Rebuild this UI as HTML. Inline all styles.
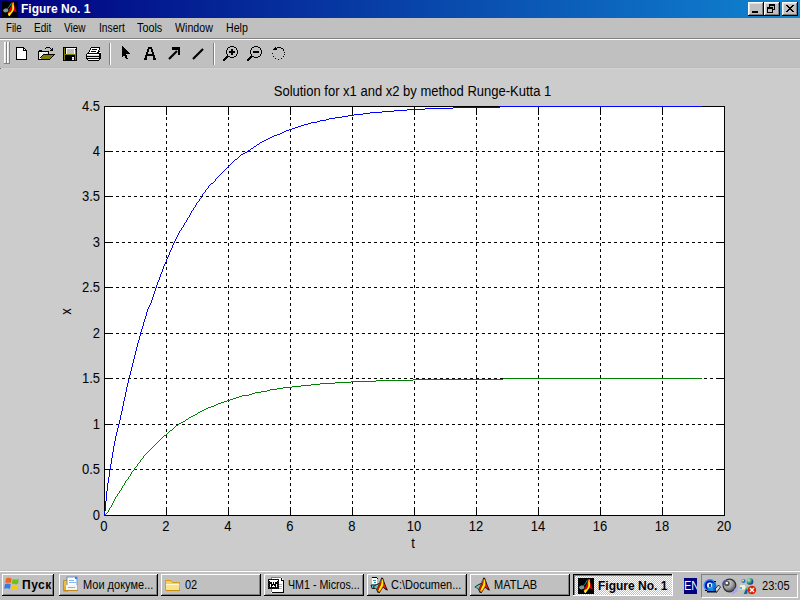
<!DOCTYPE html>
<html><head><meta charset="utf-8">
<style>
*{margin:0;padding:0;box-sizing:border-box}
html,body{width:800px;height:600px;overflow:hidden;background:#cccccc;font-family:"Liberation Sans",sans-serif}
.a{position:absolute}
#title{left:0;top:0;width:800px;height:18px;background:linear-gradient(to right,#000080,#1084d0)}
.tbtn{top:2px;width:16px;height:14px;background:#c0c0c0;box-shadow:inset -1px -1px #000,inset 1px 1px #fff,inset -2px -2px #808080,inset 2px 2px #dfdfdf}
#menu{left:0;top:18px;width:800px;height:22px;background:#c0c0c0;border-bottom:1px solid #fff}
#menu:after{content:"";position:absolute;left:0;top:20px;width:800px;height:1px;background:#808080}
.mi{top:21px;font-size:12px;color:#000;line-height:14px;white-space:nowrap;transform-origin:0 0}
#tool{left:0;top:40px;width:800px;height:28px;background:#c0c0c0}
.sep{top:43px;width:2px;height:22px;border-left:1px solid #808080;border-right:1px solid #fff}
.lbl{font-size:14px;line-height:15px;color:#000;white-space:nowrap;transform:scaleX(0.9286)}
#task{left:0;top:570px;width:800px;height:30px;background:#c0c0c0;border-top:1px solid #c0c0c0}
#task:after{content:"";position:absolute;left:0;top:0;width:800px;height:1px;background:#fff}
.btn{top:574px;height:22px;background:#c0c0c0;box-shadow:inset -1px -1px #000,inset 1px 1px #fff,inset -2px -2px #808080}
.bt{font-size:11px;line-height:12px;color:#000;white-space:nowrap;position:absolute;top:6px}
</style></head><body>
<div id="title" class="a"></div>
<div class="a" style="left:21px;top:2px;font-weight:bold;font-size:12px;line-height:14px;color:#fff;white-space:nowrap">Figure No. 1</div>
<div class="a tbtn" style="left:748px"><div class="a" style="left:4px;top:9px;width:6px;height:2px;background:#000"></div></div>
<div class="a tbtn" style="left:764px"><svg class="a" style="left:0;top:0" width="16" height="14" shape-rendering="crispEdges"><path d="M5 2h6v6h-6z M5 4h6" fill="none"/><rect x="5" y="2" width="6" height="2" fill="#000"/><rect x="10" y="2" width="1" height="6" fill="#000"/><rect x="8" y="7" width="3" height="1" fill="#000"/><rect x="5" y="4" width="1" height="1" fill="#000"/><rect x="3" y="5" width="6" height="2" fill="#000"/><rect x="3" y="5" width="1" height="6" fill="#000"/><rect x="8" y="5" width="1" height="6" fill="#000"/><rect x="3" y="10" width="6" height="1" fill="#000"/></svg></div>
<div class="a tbtn" style="left:782px"><svg class="a" style="left:0;top:0" width="16" height="14" shape-rendering="crispEdges"><rect x="4" y="3" width="2" height="1" fill="#000"/><rect x="10" y="3" width="2" height="1" fill="#000"/><rect x="5" y="4" width="2" height="1" fill="#000"/><rect x="9" y="4" width="2" height="1" fill="#000"/><rect x="6" y="5" width="2" height="1" fill="#000"/><rect x="8" y="5" width="2" height="1" fill="#000"/><rect x="7" y="6" width="2" height="1" fill="#000"/><rect x="6" y="7" width="2" height="1" fill="#000"/><rect x="8" y="7" width="2" height="1" fill="#000"/><rect x="5" y="8" width="2" height="1" fill="#000"/><rect x="9" y="8" width="2" height="1" fill="#000"/><rect x="4" y="9" width="2" height="1" fill="#000"/><rect x="10" y="9" width="2" height="1" fill="#000"/></svg></div>
<div id="menu" class="a"></div>
<div class="a mi" style="left:5.69px;transform:scaleX(0.811)">File</div>
<div class="a mi" style="left:33.66px;transform:scaleX(0.835)">Edit</div>
<div class="a mi" style="left:64.20px;transform:scaleX(0.835)">View</div>
<div class="a mi" style="left:98.64px;transform:scaleX(0.859)">Insert</div>
<div class="a mi" style="left:137.20px;transform:scaleX(0.900)">Tools</div>
<div class="a mi" style="left:175.40px;transform:scaleX(0.888)">Window</div>
<div class="a mi" style="left:225.71px;transform:scaleX(0.887)">Help</div>
<div id="tool" class="a"></div>
<div class="a" style="left:0;top:67px;width:800px;height:1px;background:#bcbcbc"></div><div class="a" style="left:0;top:68px;width:800px;height:1px;background:#d2d2d2"></div><div class="a" style="left:0;top:68px;width:1px;height:1px;background:#707070"></div>
<svg class="a" style="left:0;top:40px" width="300" height="28" shape-rendering="crispEdges"><rect x="4" y="2" width="3" height="22" fill="#808080"/><rect x="4" y="2" width="2" height="21" fill="#fff"/><rect x="5" y="3" width="1" height="20" fill="#e8e8e8"/><rect x="7" y="2" width="3" height="22" fill="#808080"/><rect x="7" y="2" width="2" height="21" fill="#fff"/><rect x="8" y="3" width="1" height="20" fill="#e8e8e8"/><rect x="109" y="3" width="1" height="22" fill="#808080"/><rect x="110" y="3" width="1" height="22" fill="#fff"/><rect x="213" y="3" width="1" height="22" fill="#808080"/><rect x="214" y="3" width="1" height="22" fill="#fff"/></svg>
<svg class="a" style="left:0;top:0" width="300" height="70" shape-rendering="crispEdges"><path d="M16 47h8v1h-8z M16 47h1v13h-1z M16 59h11v1h-11z M26 50h1v10h-1z M23 47h1v4h-1z M23 50h4v1h-4z M24 48h1v1h-1z M25 49h1v1h-1z" fill="#000"/><path d="M17 48h6v3h-6z M17 51h9v8h-9z M24 49h1v1h-1z" fill="#fff"/><path d="M38 51h11v1h-11z M38 51h1v9h-1z M39 50h3v1h-3z M38 59h12v1h-12z M48 51h1v3h-1z" fill="#000"/><path d="M39 52h9v2h-9z M39 54h4v5h-4z" fill="#ffff00"/><path d="M40 52h1v1h-1z M42 52h1v1h-1z M44 52h1v1h-1z M46 52h1v1h-1z M41 53h1v1h-1z M43 53h1v1h-1z M45 53h1v1h-1z M40 54h1v1h-1z M42 54h1v1h-1z M41 55h1v1h-1z M40 56h1v1h-1z M40 58h1v1h-1z" fill="#fff"/><path d="M43 54h12v1h-12z M42 55h1v1h-1z M41 56h1v1h-1z M40 57h1v1h-1z M54 55h-1v1h1z M52 56h1v1h-1z M51 57h1v1h-1z M50 58h1v1h-1z" fill="#000"/><path d="M43 55h10v1h-10z M42 56h10v1h-10z M41 57h10v1h-10z M41 58h9v1h-9z" fill="#808000"/><path d="M45 48h1v1h-1z M46 47h4v1h-4z M50 48h1v1h-1z M51 49h1v1h-1z M50 50h3v1h-3z M52 48h1v2h-1z" fill="#000"/><path d="M63 47h14v14h-14z" fill="#000"/><path d="M64 48h1v12h-1z M75 50h1v10h-1z M64 54h12v1h-12z" fill="#808000"/><path d="M66 48h9v6h-9z" fill="#fff"/><path d="M67 49h7v5h-7z" fill="#c0c0c0"/><path d="M66 54h9v1h-9z" fill="#808000"/><path d="M72 57h2v3h-2z M75 48h1v1h-1z" fill="#fff"/><path d="M72 58h2v1h-2z" fill="#c0c0c0"/><path d="M91 47h9v1h-9z M90 48h1v2h-1z M99 48h1v2h-1z M89 50h1v2h-1z M98 50h1v2h-1z M88 52h1v1h-1z M97 52h1v1h-1z M87 53h13v1h-13z M86 54h1v5h-1z M99 54h1v5h-1z M86 56h14v1h-14z M86 58h15v1h-15z M87 59h1v1h-1z M100 54h1v5h-1z M88 60h11v1h-11z M99 59h1v1h-1z" fill="#000"/><path d="M91 48h8v2h-8z M90 50h8v2h-8z M89 52h8v1h-8z M87 54h12v2h-12z M88 59h11v1h-11z" fill="#fff"/><path d="M92 49h5v1h-5z M91 51h5v1h-5z" fill="#000"/><path d="M87 57h12v1h-12z" fill="#e0e0e0"/><path d="M93 57h4v1h-4z" fill="#ffff00"/><path d="M87 55h12v1h-12z" fill="#d8d8d8"/><path d="M100 53h1v1h-1z M98 52h1v1h-1z M99 51h1v1h-1z" fill="#000"/><path d="M100 52h1v1h-1z M99 52h1v1h-1z" fill="#fff"/><path d="M122 46 L122 57 L124 55 L126 59 L128 59 L126 54 L130 54 Z" fill="#000"/><path d="M148 47h4v2h-4z M147 49h2v3h-2z M151 49h2v3h-2z M146 52h2v3h-2z M152 52h2v3h-2z M147 54h6v2h-6z M145 55h2v3h-2z M153 55h2v3h-2z M144 58h3v2h-3z M153 58h3v2h-3z" fill="#000"/><path d="M169 59 L177 51" stroke="#000" stroke-width="2.2" fill="none" shape-rendering="auto"/><path d="M172 47h8v8h-2v-5h-6z" fill="#000"/><path d="M193 59 L203 49" stroke="#000" stroke-width="2.2" fill="none" shape-rendering="auto"/><path d="M230 46h4v1h-4zM228 47h2v1h-2zM234 47h2v1h-2zM227 48h1v2h-1zM236 48h1v2h-1zM226 50h1v4h-1zM237 50h1v4h-1zM227 54h1v2h-1zM236 54h1v2h-1zM228 56h2v1h-2zM234 56h2v1h-2zM230 57h4v1h-4zM226 56h2v1h-2zM225 57h3v1h-3zM224 58h3v1h-3zM223 59h3v1h-3zM223 60h2v1h-2zM227 55h1v1h-1zM231 49h2v6h-2z M229 51h6v2h-6zM254 46h4v1h-4zM252 47h2v1h-2zM258 47h2v1h-2zM251 48h1v2h-1zM260 48h1v2h-1zM250 50h1v4h-1zM261 50h1v4h-1zM251 54h1v2h-1zM260 54h1v2h-1zM252 56h2v1h-2zM258 56h2v1h-2zM254 57h4v1h-4zM250 56h2v1h-2zM249 57h3v1h-3zM248 58h3v1h-3zM247 59h3v1h-3zM247 60h2v1h-2zM251 55h1v1h-1zM253 51h6v2h-6zM275 47h1v1h-1zM274 48h3v1h-3zM273 49h4v1h-4zM277 47h4v1h-4zM281 48h2v1h-2zM283 49h1v2h-1zM284 52h1v1h-1zM284 54h1v1h-1zM283 56h1v1h-1zM281 58h1v1h-1zM278 59h1v1h-1zM275 58h1v1h-1zM273 56h1v1h-1zM272 53h1v1h-1z" fill="#000"/></svg>
<svg class="a" style="left:0;top:0" width="800" height="570" shape-rendering="crispEdges"><rect x="104" y="106" width="621" height="410" fill="#fff"/><path d="M166.5 515.5V106 M228.5 515.5V106 M290.5 515.5V106 M352.5 515.5V106 M414.5 515.5V106 M476.5 515.5V106 M538.5 515.5V106 M600.5 515.5V106 M662.5 515.5V106" stroke="#000" stroke-width="1" stroke-dasharray="3 3" fill="none"/><path d="M104 469.5H724 M104 424.5H724 M104 378.5H724 M104 333.5H724 M104 287.5H724 M104 242.5H724 M104 196.5H724 M104 151.5H724" stroke="#000" stroke-width="1" stroke-dasharray="3 3" fill="none"/><path d="M166.5 507V515 M166.5 107V115 M228.5 507V515 M228.5 107V115 M290.5 507V515 M290.5 107V115 M352.5 507V515 M352.5 107V115 M414.5 507V515 M414.5 107V115 M476.5 507V515 M476.5 107V115 M538.5 507V515 M538.5 107V115 M600.5 507V515 M600.5 107V115 M662.5 507V515 M662.5 107V115 M105 469.5H113 M716 469.5H724 M105 424.5H113 M716 424.5H724 M105 378.5H113 M716 378.5H724 M105 333.5H113 M716 333.5H724 M105 287.5H113 M716 287.5H724 M105 242.5H113 M716 242.5H724 M105 196.5H113 M716 196.5H724 M105 151.5H113 M716 151.5H724" stroke="#000" stroke-width="1" fill="none"/><path d="M503 378h199v1h-199zM413 379h90v1h-90zM376 380h37v1h-37zM351 381h25v1h-25zM335 382h16v1h-16zM320 383h15v1h-15zM311 384h9v1h-9zM301 385h10v1h-10zM292 386h9v1h-9zM283 387h9v1h-9zM277 388h6v1h-6zM270 389h7v1h-7zM267 390h3v1h-3zM261 391h6v1h-6zM255 392h6v1h-6zM252 393h3v1h-3zM249 394h3v1h-3zM242 395h7v1h-7zM239 396h3v1h-3zM236 397h3v1h-3zM233 398h3v1h-3zM230 399h3v1h-3zM227 400h3v1h-3zM224 401h3v1h-3zM221 402h3v1h-3zM218 403h3v1h-3zM216 404h2v1h-2zM214 405h2v1h-2zM211 406h3v1h-3zM208 407h3v1h-3zM206 408h2v1h-2zM204 409h2v1h-2zM202 410h2v1h-2zM200 411h2v1h-2zM198 412h2v1h-2zM197 413h1v1h-1zM195 414h2v1h-2zM193 415h2v1h-2zM191 416h2v1h-2zM189 417h2v1h-2zM188 418h1v1h-1zM186 419h2v1h-2zM185 420h1v1h-1zM183 421h2v1h-2zM181 422h2v1h-2zM179 423h2v1h-2zM178 424h1v1h-1zM176 425h2v1h-2zM175 426h1v1h-1zM174 427h1v1h-1zM173 428h1v1h-1zM172 429h1v1h-1zM170 430h2v1h-2zM169 431h1v1h-1zM168 432h1v1h-1zM167 433h1v1h-1zM166 434h1v1h-1zM164 435h2v1h-2zM163 436h1v1h-1zM162 437h1v1h-1zM161 438h1v1h-1zM160 439h1v1h-1zM159 440h1v1h-1zM158 441h1v1h-1zM157 442h1v1h-1zM156 443h1v1h-1zM155 444h1v1h-1zM154 445h1v1h-1zM153 446h1v1h-1zM152 447h1v1h-1zM151 448h1v1h-1zM150 449h1v1h-1zM149 450h1v1h-1zM148 451h1v1h-1zM147 452h1v1h-1zM146 453h1v1h-1zM145 454h1v1h-1zM144 455h1v1h-1zM143 456h1v1h-1zM143 457h1v1h-1zM142 458h1v1h-1zM141 459h1v1h-1zM140 460h1v1h-1zM140 461h1v1h-1zM139 462h1v1h-1zM138 463h1v1h-1zM137 464h1v1h-1zM137 465h1v1h-1zM136 466h1v1h-1zM135 467h1v1h-1zM134 468h1v1h-1zM134 469h1v1h-1zM133 470h1v1h-1zM132 471h1v1h-1zM131 472h1v1h-1zM131 473h1v1h-1zM130 474h1v1h-1zM130 475h1v1h-1zM129 476h1v1h-1zM128 477h1v1h-1zM128 478h1v1h-1zM127 479h1v1h-1zM126 480h1v1h-1zM125 481h1v1h-1zM125 482h1v1h-1zM124 483h1v1h-1zM124 484h1v1h-1zM123 485h1v1h-1zM122 486h1v1h-1zM122 487h1v1h-1zM121 488h1v1h-1zM121 489h1v1h-1zM120 490h1v1h-1zM119 491h1v1h-1zM119 492h1v1h-1zM118 493h1v1h-1zM117 494h1v1h-1zM117 495h1v1h-1zM116 496h1v1h-1zM115 497h1v1h-1zM115 498h1v1h-1zM114 499h1v1h-1zM114 500h1v1h-1zM113 501h1v1h-1zM113 502h1v1h-1zM112 503h1v1h-1zM112 504h1v1h-1zM111 505h1v1h-1zM111 506h1v1h-1zM110 507h1v1h-1zM109 508h1v1h-1zM109 509h1v1h-1zM108 510h1v1h-1zM108 511h1v1h-1zM107 512h1v1h-1zM106 513h1v1h-1zM105 514h1v1h-1zM104 515h1v1h-1z" fill="#008000"/><rect x="104.5" y="106.5" width="620" height="409" fill="none" stroke="#000" stroke-width="1"/><path d="M500 106h202v1h-202zM453 107h47v1h-47zM425 108h28v1h-28zM407 109h18v1h-18zM394 110h13v1h-13zM382 111h12v1h-12zM370 112h12v1h-12zM363 113h7v1h-7zM354 114h9v1h-9zM348 115h6v1h-6zM342 116h6v1h-6zM335 117h7v1h-7zM329 118h6v1h-6zM326 119h3v1h-3zM320 120h6v1h-6zM317 121h3v1h-3zM311 122h6v1h-6zM308 123h3v1h-3zM304 124h4v1h-4zM301 125h3v1h-3zM298 126h3v1h-3zM295 127h3v1h-3zM292 128h3v1h-3zM289 129h3v1h-3zM286 130h3v1h-3zM284 131h2v1h-2zM282 132h2v1h-2zM280 133h2v1h-2zM277 134h3v1h-3zM274 135h3v1h-3zM272 136h2v1h-2zM270 137h2v1h-2zM268 138h2v1h-2zM266 139h2v1h-2zM264 140h2v1h-2zM262 141h2v1h-2zM260 142h2v1h-2zM259 143h1v1h-1zM257 144h2v1h-2zM256 145h1v1h-1zM254 146h2v1h-2zM253 147h1v1h-1zM251 148h2v1h-2zM250 149h1v1h-1zM248 150h2v1h-2zM247 151h1v1h-1zM245 152h2v1h-2zM243 153h2v1h-2zM241 154h2v1h-2zM240 155h1v1h-1zM239 156h1v1h-1zM238 157h1v1h-1zM237 158h1v1h-1zM235 159h2v1h-2zM234 160h1v1h-1zM233 161h1v1h-1zM232 162h1v1h-1zM231 163h1v1h-1zM230 164h1v1h-1zM229 165h1v1h-1zM228 166h1v1h-1zM227 167h1v1h-1zM226 168h1v1h-1zM225 169h1v1h-1zM224 170h1v1h-1zM223 171h1v1h-1zM222 172h1v1h-1zM221 173h1v1h-1zM220 174h1v1h-1zM219 175h1v1h-1zM218 176h1v1h-1zM217 177h1v1h-1zM216 178h1v1h-1zM215 179h1v1h-1zM215 180h1v1h-1zM214 181h1v1h-1zM213 182h1v1h-1zM211 183h2v1h-2zM210 184h1v1h-1zM209 185h1v1h-1zM208 186h1v1h-1zM208 187h1v1h-1zM207 188h1v1h-1zM206 189h1v1h-1zM205 190h1v1h-1zM205 191h1v1h-1zM204 192h1v1h-1zM203 193h1v1h-1zM202 194h1v1h-1zM202 195h1v1h-1zM201 196h1v1h-1zM201 197h1v1h-1zM200 198h1v1h-1zM199 199h1v1h-1zM199 200h1v1h-1zM198 201h1v1h-1zM197 202h1v1h-1zM196 203h1v1h-1zM196 204h1v1h-1zM195 205h1v1h-1zM195 206h1v1h-1zM194 207h1v1h-1zM193 208h1v1h-1zM193 209h1v1h-1zM192 210h1v1h-1zM191 211h1v1h-1zM191 212h1v1h-1zM190 213h1v1h-1zM190 214h1v1h-1zM189 215h1v1h-1zM189 216h1v1h-1zM188 217h1v1h-1zM187 218h1v1h-1zM187 219h1v1h-1zM186 220h1v1h-1zM186 221h1v1h-1zM185 222h1v1h-1zM184 223h1v1h-1zM184 224h1v1h-1zM183 225h1v1h-1zM183 226h1v1h-1zM182 227h1v1h-1zM181 228h1v1h-1zM181 229h1v1h-1zM180 230h1v1h-1zM179 231h1v1h-1zM179 232h1v1h-1zM178 233h1v1h-1zM178 234h1v1h-1zM177 235h1v1h-1zM177 236h1v1h-1zM176 237h1v1h-1zM176 238h1v1h-1zM175 239h1v1h-1zM175 240h1v1h-1zM174 241h1v1h-1zM174 242h1v1h-1zM173 243h1v1h-1zM173 244h1v1h-1zM172 245h1v1h-1zM172 246h1v1h-1zM172 247h1v1h-1zM171 248h1v1h-1zM171 249h1v1h-1zM170 250h1v1h-1zM170 251h1v1h-1zM169 252h1v1h-1zM169 253h1v1h-1zM169 254h1v1h-1zM168 255h1v1h-1zM168 256h1v1h-1zM167 257h1v1h-1zM167 258h1v1h-1zM166 259h1v1h-1zM166 260h1v1h-1zM166 261h1v1h-1zM165 262h1v1h-1zM165 263h1v1h-1zM164 264h1v1h-1zM164 265h1v1h-1zM163 266h1v1h-1zM163 267h1v1h-1zM163 268h1v1h-1zM162 269h1v1h-1zM162 270h1v1h-1zM162 271h1v1h-1zM161 272h1v1h-1zM161 273h1v1h-1zM160 274h1v1h-1zM160 275h1v1h-1zM160 276h1v1h-1zM159 277h1v1h-1zM159 278h1v1h-1zM159 279h1v1h-1zM158 280h1v1h-1zM158 281h1v1h-1zM157 282h1v1h-1zM157 283h1v1h-1zM157 284h1v1h-1zM156 285h1v1h-1zM156 286h1v1h-1zM156 287h1v1h-1zM155 288h1v1h-1zM155 289h1v1h-1zM155 290h1v1h-1zM154 291h1v1h-1zM154 292h1v1h-1zM154 293h1v1h-1zM153 294h1v1h-1zM153 295h1v1h-1zM153 296h1v1h-1zM152 297h1v1h-1zM152 298h1v1h-1zM152 299h1v1h-1zM151 300h1v1h-1zM151 301h1v1h-1zM151 302h1v1h-1zM150 303h1v1h-1zM150 304h1v1h-1zM149 305h1v1h-1zM149 306h1v1h-1zM148 307h1v1h-1zM148 308h1v1h-1zM147 309h1v1h-1zM147 310h1v1h-1zM147 311h1v1h-1zM146 312h1v1h-1zM146 313h1v1h-1zM146 314h1v1h-1zM146 315h1v1h-1zM145 316h1v1h-1zM145 317h1v1h-1zM145 318h1v1h-1zM144 319h1v1h-1zM144 320h1v1h-1zM144 321h1v1h-1zM143 322h1v1h-1zM143 323h1v1h-1zM143 324h1v1h-1zM143 325h1v1h-1zM142 326h1v1h-1zM142 327h1v1h-1zM142 328h1v1h-1zM141 329h1v1h-1zM141 330h1v1h-1zM141 331h1v1h-1zM140 332h1v1h-1zM140 333h1v1h-1zM140 334h1v1h-1zM140 335h1v1h-1zM139 336h1v1h-1zM139 337h1v1h-1zM139 338h1v1h-1zM139 339h1v1h-1zM138 340h1v1h-1zM138 341h1v1h-1zM138 342h1v1h-1zM137 343h1v1h-1zM137 344h1v1h-1zM137 345h1v1h-1zM137 346h1v1h-1zM136 347h1v1h-1zM136 348h1v1h-1zM136 349h1v1h-1zM136 350h1v1h-1zM135 351h1v1h-1zM135 352h1v1h-1zM135 353h1v1h-1zM135 354h1v1h-1zM134 355h1v1h-1zM134 356h1v1h-1zM134 357h1v1h-1zM134 358h1v1h-1zM133 359h1v1h-1zM133 360h1v1h-1zM133 361h1v1h-1zM133 362h1v1h-1zM132 363h1v1h-1zM132 364h1v1h-1zM132 365h1v1h-1zM132 366h1v1h-1zM131 367h1v1h-1zM131 368h1v1h-1zM131 369h1v1h-1zM131 370h1v1h-1zM130 371h1v1h-1zM130 372h1v1h-1zM130 373h1v1h-1zM130 374h1v1h-1zM129 375h1v1h-1zM129 376h1v1h-1zM129 377h1v1h-1zM129 378h1v1h-1zM128 379h1v1h-1zM128 380h1v1h-1zM128 381h1v1h-1zM128 382h1v1h-1zM127 383h1v1h-1zM127 384h1v1h-1zM127 385h1v1h-1zM127 386h1v1h-1zM126 387h1v1h-1zM126 388h1v1h-1zM126 389h1v1h-1zM126 390h1v1h-1zM126 391h1v1h-1zM125 392h1v1h-1zM125 393h1v1h-1zM125 394h1v1h-1zM125 395h1v1h-1zM125 396h1v1h-1zM124 397h1v1h-1zM124 398h1v1h-1zM124 399h1v1h-1zM124 400h1v1h-1zM123 401h1v1h-1zM123 402h1v1h-1zM123 403h1v1h-1zM123 404h1v1h-1zM123 405h1v1h-1zM122 406h1v1h-1zM122 407h1v1h-1zM122 408h1v1h-1zM122 409h1v1h-1zM122 410h1v1h-1zM121 411h1v1h-1zM121 412h1v1h-1zM121 413h1v1h-1zM121 414h1v1h-1zM120 415h1v1h-1zM120 416h1v1h-1zM120 417h1v1h-1zM120 418h1v1h-1zM120 419h1v1h-1zM119 420h1v1h-1zM119 421h1v1h-1zM119 422h1v1h-1zM119 423h1v1h-1zM118 424h1v1h-1zM118 425h1v1h-1zM118 426h1v1h-1zM118 427h1v1h-1zM117 428h1v1h-1zM117 429h1v1h-1zM117 430h1v1h-1zM117 431h1v1h-1zM116 432h1v1h-1zM116 433h1v1h-1zM116 434h1v1h-1zM116 435h1v1h-1zM115 436h1v1h-1zM115 437h1v1h-1zM115 438h1v1h-1zM115 439h1v1h-1zM115 440h1v1h-1zM114 441h1v1h-1zM114 442h1v1h-1zM114 443h1v1h-1zM114 444h1v1h-1zM114 445h1v1h-1zM113 446h1v1h-1zM113 447h1v1h-1zM113 448h1v1h-1zM113 449h1v1h-1zM113 450h1v1h-1zM113 451h1v1h-1zM112 452h1v1h-1zM112 453h1v1h-1zM112 454h1v1h-1zM112 455h1v1h-1zM112 456h1v1h-1zM112 457h1v1h-1zM111 458h1v1h-1zM111 459h1v1h-1zM111 460h1v1h-1zM111 461h1v1h-1zM111 462h1v1h-1zM111 463h1v1h-1zM110 464h1v1h-1zM110 465h1v1h-1zM110 466h1v1h-1zM110 467h1v1h-1zM110 468h1v1h-1zM110 469h1v1h-1zM109 470h1v1h-1zM109 471h1v1h-1zM109 472h1v1h-1zM109 473h1v1h-1zM109 474h1v1h-1zM109 475h1v1h-1zM109 476h1v1h-1zM108 477h1v1h-1zM108 478h1v1h-1zM108 479h1v1h-1zM108 480h1v1h-1zM108 481h1v1h-1zM108 482h1v1h-1zM107 483h1v1h-1zM107 484h1v1h-1zM107 485h1v1h-1zM107 486h1v1h-1zM107 487h1v1h-1zM107 488h1v1h-1zM107 489h1v1h-1zM107 490h1v1h-1zM106 491h1v1h-1zM106 492h1v1h-1zM106 493h1v1h-1zM106 494h1v1h-1zM106 495h1v1h-1zM106 496h1v1h-1zM106 497h1v1h-1zM106 498h1v1h-1zM106 499h1v1h-1zM106 500h1v1h-1zM105 501h1v1h-1zM105 502h1v1h-1zM105 503h1v1h-1zM105 504h1v1h-1zM105 505h1v1h-1zM105 506h1v1h-1zM105 507h1v1h-1zM105 508h1v1h-1zM105 509h1v1h-1zM105 510h1v1h-1zM104 511h1v1h-1zM104 512h1v1h-1zM104 513h1v1h-1zM104 514h1v1h-1zM104 515h1v1h-1z" fill="#0000ff"/></svg>
<div class="a lbl" style="left:0;width:825px;top:84px;text-align:center">Solution for x1 and x2 by method Runge-Kutta 1</div>
<div class="a lbl" style="left:0;width:100px;top:508px;text-align:right;transform-origin:100% 0">0</div>
<div class="a lbl" style="left:0;width:100px;top:462px;text-align:right;transform-origin:100% 0">0.5</div>
<div class="a lbl" style="left:0;width:100px;top:417px;text-align:right;transform-origin:100% 0">1</div>
<div class="a lbl" style="left:0;width:100px;top:371px;text-align:right;transform-origin:100% 0">1.5</div>
<div class="a lbl" style="left:0;width:100px;top:326px;text-align:right;transform-origin:100% 0">2</div>
<div class="a lbl" style="left:0;width:100px;top:280px;text-align:right;transform-origin:100% 0">2.5</div>
<div class="a lbl" style="left:0;width:100px;top:235px;text-align:right;transform-origin:100% 0">3</div>
<div class="a lbl" style="left:0;width:100px;top:189px;text-align:right;transform-origin:100% 0">3.5</div>
<div class="a lbl" style="left:0;width:100px;top:144px;text-align:right;transform-origin:100% 0">4</div>
<div class="a lbl" style="left:0;width:100px;top:99px;text-align:right;transform-origin:100% 0">4.5</div>
<div class="a lbl" style="left:84px;width:40px;top:519px;text-align:center">0</div>
<div class="a lbl" style="left:146px;width:40px;top:519px;text-align:center">2</div>
<div class="a lbl" style="left:208px;width:40px;top:519px;text-align:center">4</div>
<div class="a lbl" style="left:270px;width:40px;top:519px;text-align:center">6</div>
<div class="a lbl" style="left:332px;width:40px;top:519px;text-align:center">8</div>
<div class="a lbl" style="left:394px;width:40px;top:519px;text-align:center">10</div>
<div class="a lbl" style="left:456px;width:40px;top:519px;text-align:center">12</div>
<div class="a lbl" style="left:518px;width:40px;top:519px;text-align:center">14</div>
<div class="a lbl" style="left:580px;width:40px;top:519px;text-align:center">16</div>
<div class="a lbl" style="left:642px;width:40px;top:519px;text-align:center">18</div>
<div class="a lbl" style="left:704px;width:40px;top:519px;text-align:center">20</div>
<div class="a lbl" style="left:393px;width:40px;top:536px;text-align:center">t</div>
<div class="a lbl" style="left:46px;top:304px;width:40px;text-align:center;transform:rotate(-90deg) scaleX(0.9286)">x</div>
<div id="task" class="a"></div>
<div class="a btn" style="left:2px;width:52px"></div>
<svg class="a" style="left:4px;top:577px" width="16" height="14" viewBox="0 0 16 14"><path d="M2 1.5 Q4.5 0 7.5 1.5 L6.8 6 Q4 4.8 1.2 6 Z" fill="#f0641e"/><path d="M8.5 2 Q11.5 3.2 14.8 2 L14 6.8 Q11 8 7.8 6.6 Z" fill="#6cc21c"/><path d="M1 7 Q4 5.8 6.7 7.2 L6 11.8 Q3.2 10.6 0.2 11.8 Z" fill="#3a78e8"/><path d="M7.6 7.6 Q10.8 9 13.8 7.8 L13 12.6 Q10 13.8 6.9 12.2 Z" fill="#f8c818"/></svg>
<div class="a" style="left:22px;top:579px;font-weight:bold;font-size:12px;line-height:12px;white-space:nowrap;letter-spacing:0.5px">Пуск</div>
<div class="a btn" style="left:59px;width:99px"></div>
<div class="a" style="left:83px;top:578px;font-size:12px;line-height:14px;white-space:nowrap;transform:scaleX(0.917);transform-origin:0 0">Мои докуме...</div>
<div class="a btn" style="left:161px;width:100px"></div>
<div class="a" style="left:185px;top:578px;font-size:12px;line-height:14px;white-space:nowrap;transform:scaleX(0.917);transform-origin:0 0">02</div>
<div class="a btn" style="left:264px;width:100px"></div>
<div class="a" style="left:288px;top:578px;font-size:12px;line-height:14px;white-space:nowrap;transform:scaleX(0.889);transform-origin:0 0">ЧМ1 - Micros...</div>
<div class="a btn" style="left:367px;width:100px"></div>
<div class="a" style="left:391px;top:578px;font-size:12px;line-height:14px;white-space:nowrap;transform:scaleX(0.917);transform-origin:0 0">C:\Documen...</div>
<div class="a btn" style="left:470px;width:100px"></div>
<div class="a" style="left:494px;top:578px;font-size:12px;line-height:14px;white-space:nowrap;transform:scaleX(0.917);transform-origin:0 0">MATLAB</div>
<svg class="a" style="left:573px;top:574px" width="100" height="22" shape-rendering="crispEdges"><defs><pattern id="dith" width="2" height="2" patternUnits="userSpaceOnUse"><rect width="2" height="2" fill="#fff"/><rect width="1" height="1" fill="#c0c0c0"/><rect x="1" y="1" width="1" height="1" fill="#c0c0c0"/></pattern></defs><rect width="100" height="22" fill="url(#dith)"/><rect width="100" height="1" fill="#000"/><rect width="1" height="22" fill="#000"/><rect x="1" y="1" width="98" height="1" fill="#808080"/><rect x="1" y="1" width="1" height="20" fill="#808080"/><rect x="99" y="0" width="1" height="22" fill="#fff"/><rect x="0" y="21" width="100" height="1" fill="#fff"/></svg>
<div class="a" style="left:598px;top:580px;font-weight:bold;font-size:12px;line-height:12px;white-space:nowrap">Figure No. 1</div>
<div class="a" style="left:684px;top:578px;width:13px;height:16px;background:#000080;overflow:hidden"><div class="a" style="left:0.3px;top:1px;font-size:12px;line-height:14px;color:#fff;white-space:nowrap;transform:scaleX(0.92);transform-origin:0 0">EN</div></div>
<div class="a" style="left:701px;top:574px;width:97px;height:24px;border-top:1px solid #808080;border-left:1px solid #808080;border-right:1px solid #fff;border-bottom:1px solid #fff"></div>
<div class="a" style="left:762.1px;top:579px;font-size:12px;line-height:14px;white-space:nowrap;transform:scaleX(0.92);transform-origin:0 0">23:05</div>
<svg class="a" style="left:0;top:0" width="800" height="600"><rect x="2" y="1" width="16" height="16" fill="#000"/><g transform="translate(2 1)"><path d="M1 9 L3 7.5 L5.5 7.5 L6.5 9 L5.5 11 L3 11.5 L1.5 10.5 Z" fill="#7898a0"/><path d="M5 7.5 L7 5.5 L9 2 L10 1.5 L9.5 3 L7.5 6 L6 7.5 Z" fill="#20a0a0"/><path d="M5.5 12.5 L7 9.5 L9 5 L10 1.5 L11.5 1.5 L12.5 5 L13.5 8.5 L15 11.5 L12.5 10.5 L11 10 L9 12.5 L7.5 15 Z" fill="#e00000"/><path d="M10.3 2.5 L12 3 L12 8 L11 10.5 L9 13 L7.5 15.3 L6 14 L6.5 12 L9 11 L10.3 8 Z" fill="#ffff00"/><path d="M10.7 1.3 L12 1.5 L12 4.7 L10.7 4 Z" fill="#ff9000"/></g><rect x="578" y="578" width="16" height="16" fill="#000"/><g transform="translate(578 578)"><path d="M1 9 L3 7.5 L5.5 7.5 L6.5 9 L5.5 11 L3 11.5 L1.5 10.5 Z" fill="#7898a0"/><path d="M5 7.5 L7 5.5 L9 2 L10 1.5 L9.5 3 L7.5 6 L6 7.5 Z" fill="#20a0a0"/><path d="M5.5 12.5 L7 9.5 L9 5 L10 1.5 L11.5 1.5 L12.5 5 L13.5 8.5 L15 11.5 L12.5 10.5 L11 10 L9 12.5 L7.5 15 Z" fill="#e00000"/><path d="M10.3 2.5 L12 3 L12 8 L11 10.5 L9 13 L7.5 15.3 L6 14 L6.5 12 L9 11 L10.3 8 Z" fill="#ffff00"/><path d="M10.7 1.3 L12 1.5 L12 4.7 L10.7 4 Z" fill="#ff9000"/></g><path d="M63.5 580.5 h3 v-1 h2 v11.5 h-5 z" fill="#f0c040" stroke="#c89010"/><rect x="67" y="577" width="10" height="11" fill="#fff" stroke="#7090c8" stroke-width="1"/><path d="M69 580h5v1h-5z M69 582h7v1h-7z" fill="#80b8f0"/><path d="M75 577h2v2h-2z" fill="#3080f0"/><path d="M64 586 h14 v5 h-14z" fill="#e8b020"/><path d="M66 585h11v5h-11z" fill="#f0f4f8"/><path d="M68 587h7v1h-7z" fill="#80b8f0"/><path d="M64 590h14v1h-14z" fill="#c08818"/><path d="M165.5 580.5 v9.5 h14 v-7.5 h-7 l-1.5 -2 h-5.5 z" fill="#f8d060" stroke="#d0a018" stroke-width="1"/><path d="M166 584 h13.5 l-0.5 6 h-13z" fill="#f8e490"/><path d="M166 584h13v1h-13z" fill="#fff8d0"/><path d="M166 590h14v1h-14z" fill="#c89010"/><defs><pattern id="wd" width="2" height="2" patternUnits="userSpaceOnUse"><rect width="2" height="2" fill="#0000ff"/><rect width="1" height="1" fill="#000"/><rect x="1" y="1" width="1" height="1" fill="#000"/></pattern></defs><path d="M271 577h10l3 3v13h-13z" fill="#fff"/><path d="M271 577h10v1h-10z M271 577h1v15h-1z" fill="#808080"/><path d="M283 580h1v13h-12v-1h11z M281 578h1v2h2v1h-3z" fill="#000" shape-rendering="crispEdges"/><path d="M279 584h3v1h-3z M279 586h3v1h-3z M279 588h3v1h-3z" fill="#b0b0b0"/><rect x="268" y="579" width="11" height="10" fill="url(#wd)" shape-rendering="crispEdges"/><rect x="270" y="581" width="7" height="6" fill="#fff" shape-rendering="crispEdges"/><rect x="269" y="580" width="9" height="1" fill="#fff" shape-rendering="crispEdges"/><path d="M270 582h2v2h-2z M273 582h1v3h-1z M275 582h2v2h-2z M271 584h5v1h-5z M271 585h2v1h-2z M274 585h2v1h-2z M271 586h1v1h-1z M275 586h1v1h-1z" fill="#000" shape-rendering="crispEdges"/><path d="M372 577h5v1h-5z M376 578h2v1h-2z" fill="#000"/><rect x="372" y="578" width="5" height="6" fill="#fff"/><path d="M373 580h3v1h-3z M374 582h2v1h-2z" fill="#20a0a0"/><path d="M371 585h5l1 1.5-2 2h-3z" fill="#60d0d0" stroke="#000" stroke-width="0.8"/><g transform="translate(372 577)"><path d="M0.5 10 L4 7.5 L7 6 L9.5 0.5 L11 1 L13.5 8 L16 13.5 L14 13 L11 10.5 L7.5 16 L5.5 15.5 L4 12 Z" fill="#000"/><path d="M1.5 10 L4.5 8 L7 7 L6 9.5 L4.5 12 Z" fill="#5fc8c8"/><path d="M6.5 6.5 L9.5 1.5 L8.5 6 Z" fill="#40a0a0"/><path d="M4.5 12 L7 7 L9.8 1.5 L11 2 L12.5 8 L15 12.5 L11.5 10 L7.5 15 L5.5 14.5 Z" fill="#c02000"/><path d="M9.8 2 L11 2.5 L11.5 8 L10 11 L7.5 15 L6 14 L8.5 10 L9.5 6 Z" fill="#f8a000"/><path d="M10 3 L10.8 4 L10.8 8.5 L8.5 12.5 L6.5 14 L7.5 11 L9.6 7 Z" fill="#ffff00"/><path d="M11.5 5 L12.5 8 L14.5 12 L12 10 Z" fill="#ff2000"/></g><g transform="translate(474 577)"><path d="M0.5 10 L4 7.5 L7 6 L9.5 0.5 L11 1 L13.5 8 L16 13.5 L14 13 L11 10.5 L7.5 16 L5.5 15.5 L4 12 Z" fill="#000"/><path d="M1.5 10 L4.5 8 L7 7 L6 9.5 L4.5 12 Z" fill="#5fc8c8"/><path d="M6.5 6.5 L9.5 1.5 L8.5 6 Z" fill="#40a0a0"/><path d="M4.5 12 L7 7 L9.8 1.5 L11 2 L12.5 8 L15 12.5 L11.5 10 L7.5 15 L5.5 14.5 Z" fill="#c02000"/><path d="M9.8 2 L11 2.5 L11.5 8 L10 11 L7.5 15 L6 14 L8.5 10 L9.5 6 Z" fill="#f8a000"/><path d="M10 3 L10.8 4 L10.8 8.5 L8.5 12.5 L6.5 14 L7.5 11 L9.6 7 Z" fill="#ffff00"/><path d="M11.5 5 L12.5 8 L14.5 12 L12 10 Z" fill="#ff2000"/></g><defs><radialGradient id="ng" cx="0.4" cy="0.4" r="0.6"><stop offset="0" stop-color="#60b0ff"/><stop offset="1" stop-color="#1050e0"/></radialGradient><radialGradient id="sg" cx="0.35" cy="0.3" r="0.8"><stop offset="0" stop-color="#e8e8e8"/><stop offset="0.6" stop-color="#909090"/><stop offset="1" stop-color="#303030"/></radialGradient><radialGradient id="mg" cx="0.3" cy="0.3" r="0.8"><stop offset="0" stop-color="#c0f0c0"/><stop offset="0.5" stop-color="#30a070"/><stop offset="1" stop-color="#0020a0"/></radialGradient></defs><circle cx="710" cy="585.5" r="6.5" fill="#3088ff"/><circle cx="710" cy="585.5" r="5" fill="#0010a0"/><circle cx="711" cy="586.5" r="4" fill="#1890e0"/><circle cx="709.5" cy="585" r="2.6" fill="#f0f0f0"/><path d="M709 584h2v3h-2z" fill="#1040a0"/><path d="M714 582 l1.5 1 l1 6 l-1 3 h-3z" fill="#1070d0"/><path d="M715 589 l3.5 -4 l2 2 l-4 5.5z" fill="#d8d8d8" stroke="#000" stroke-width="0.8"/><path d="M705 590h2v1h-2z M707 591h9v1.5h-9z M714 581h2v1h-2z" fill="#000"/><circle cx="729.5" cy="585.5" r="6.3" fill="url(#sg)"/><circle cx="729.5" cy="585.5" r="6.3" fill="none" stroke="#303030" stroke-width="1.2"/><circle cx="727" cy="583.5" r="2.8" fill="#505050"/><circle cx="726.8" cy="583" r="1.3" fill="#fff"/><path d="M723.5 586 a3.5 3.5 0 0 1 2.5 -5.5" stroke="#5858c0" stroke-width="1.5" fill="none"/><path d="M731.5 592.5 l6 -4 M732 594 l5.5 -3.5 M734 590 l3.5 -4" stroke="#9898f8" stroke-width="1" fill="none"/><circle cx="743.5" cy="581" r="2" fill="#2070d0"/><circle cx="743" cy="580.5" r="1" fill="#e0f0a0"/><path d="M740 585h5l1 4.5h-6z" fill="#f0f4d0"/><path d="M740 587h2v2h-2z" fill="#60b0f0"/><circle cx="750" cy="581.5" r="3.3" fill="url(#mg)"/><path d="M743.5 594 l2 -6 q3.5 -2.5 7 0 l0 6z" fill="#60c080"/><path d="M744 594 l2 -4.5 h2 l-1.5 4.5z" fill="#1050c0"/><circle cx="752" cy="590" r="4.2" fill="#e02000"/><path d="M750 588 l4 4 M754 588 l-4 4" stroke="#fff" stroke-width="1.4"/></svg>
</body></html>
